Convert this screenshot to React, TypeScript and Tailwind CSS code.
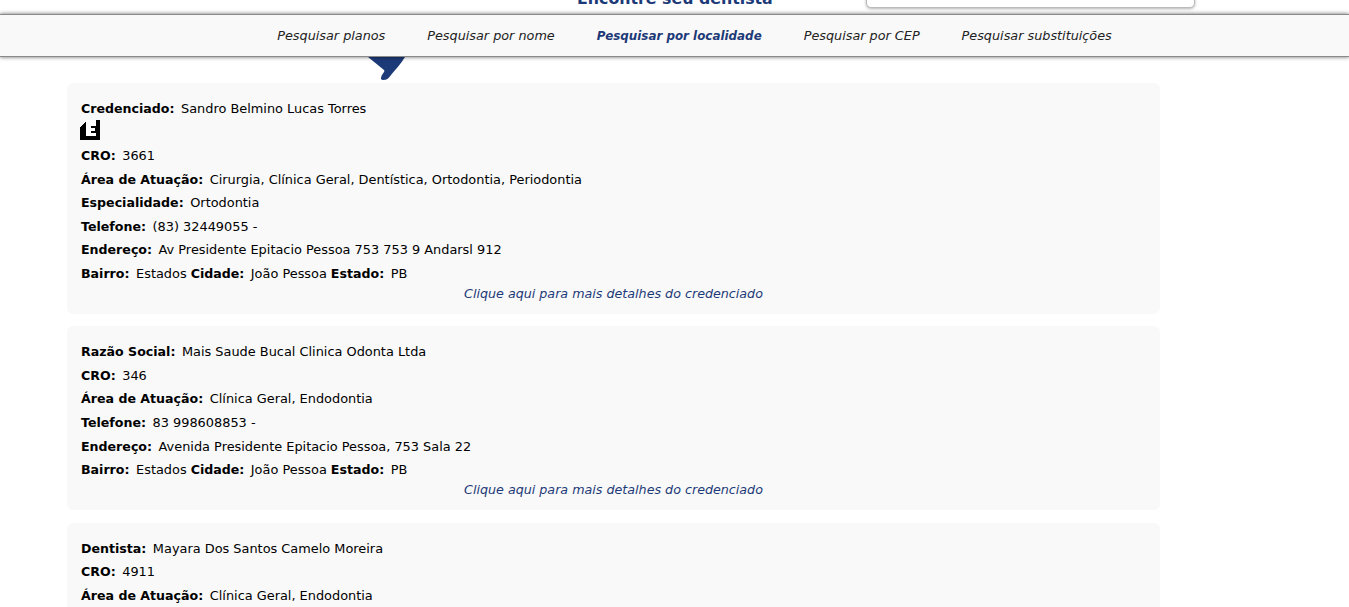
import React from "react";

const font = "font-['DejaVu_Sans',sans-serif]";

function Row({ children }: { children: React.ReactNode }) {
  return <div className="flex h-[23.6px] items-center whitespace-pre"><span>{children}</span></div>;
}
function L({ t, v }: { t: string; v: string }) {
  return (
    <>
      <b className="mr-[6.5px] text-[12.6px]">{t}</b>
      <span className="mr-[4px]">{v}</span>
    </>
  );
}
function More() {
  return <div className="mt-[-1.5px] h-[20px] text-center text-[12.7px] leading-[20px] italic text-[#1d3a78]">Clique aqui para mais detalhes do credenciado</div>;
}

const links = ["Pesquisar planos", "Pesquisar por nome", "Pesquisar por localidade", "Pesquisar por CEP", "Pesquisar substituições"];

export default function App() {
  return (
    <div className={`${font} h-[607px] overflow-hidden bg-white text-[12.9px] text-black`}>
      <div className="relative h-[14px]">
        <div className="absolute left-[866px] top-[-10px] h-[18px] w-[329px] rounded-[5px] border border-[#bbb] bg-white shadow-[0_1px_3px_rgba(0,0,0,0.3)]" />
        <div className="absolute left-[577px] top-[-11px] text-[15.8px] leading-[20px] font-bold text-[#1d3a78]">Encontre seu dentista</div>
      </div>
      <nav className="relative z-10 flex h-[43px] items-center justify-center gap-[42px] border-y border-[#8a8a8a] bg-[#f9f9f9] pt-[1px] pl-[40px] text-[12.8px] shadow-[0_0_4px_rgba(0,0,0,0.6)]">
        {links.map((l, i) => (
          <a key={l} className={i === 2 ? "mt-[1px] text-[11.9px] font-bold italic text-[#1d3a78]" : "italic text-[#222]"}>{l}</a>
        ))}
      </nav>
      <div className="relative">
        <svg className="absolute left-[367px] top-0" width="40" height="25" viewBox="0 0 40 25">
          <path d="M1 0H38C34 7 28 13 24 18C22 21 20 23 16 23C13 23 14 20 15 18C17 15 18 14 17 13Z" fill="#1d3a78" />
        </svg>
      </div>
      <main className="ml-[67px] mt-[26px] flex w-[1093px] flex-col gap-[12.4px]">
        <section className="h-[231px] rounded-[6px] bg-[#f9f9f9] px-[14px] pt-[13.9px]">
          <Row><L t="Credenciado:" v="Sandro Belmino Lucas Torres" /></Row>
          <div className="ml-[-1px] mt-[-0.5px] h-[24.1px]">
            <svg width="20" height="20" viewBox="0 0 20 20" shapeRendering="crispEdges">
              <path d="M0 8L6 1H16V0H20V20H0Z" fill="#000" />
              <path d="M6 0H16V6H11V8H15V11H11V13H16V16H6Z" fill="#fff" />
            </svg>
          </div>
          <Row><L t="CRO:" v="3661" /></Row>
          <Row><L t="Área de Atuação:" v="Cirurgia, Clínica Geral, Dentística, Ortodontia, Periodontia" /></Row>
          <Row><L t="Especialidade:" v="Ortodontia" /></Row>
          <Row><L t="Telefone:" v="(83) 32449055 -" /></Row>
          <Row><L t="Endereço:" v="Av Presidente Epitacio Pessoa 753 753 9 Andarsl 912" /></Row>
          <Row><L t="Bairro:" v="Estados" /><L t="Cidade:" v="João Pessoa" /><L t="Estado:" v="PB" /></Row>
          <More />
        </section>
        <section className="h-[184px] rounded-[6px] bg-[#f9f9f9] px-[14px] pt-[13.9px]">
          <Row><L t="Razão Social:" v="Mais Saude Bucal Clinica Odonta Ltda" /></Row>
          <Row><L t="CRO:" v="346" /></Row>
          <Row><L t="Área de Atuação:" v="Clínica Geral, Endodontia" /></Row>
          <Row><L t="Telefone:" v="83 998608853 -" /></Row>
          <Row><L t="Endereço:" v="Avenida Presidente Epitacio Pessoa, 753 Sala 22" /></Row>
          <Row><L t="Bairro:" v="Estados" /><L t="Cidade:" v="João Pessoa" /><L t="Estado:" v="PB" /></Row>
          <More />
        </section>
        <section className="h-[184px] rounded-[6px] bg-[#f9f9f9] px-[14px] pt-[13.9px]">
          <Row><L t="Dentista:" v="Mayara Dos Santos Camelo Moreira" /></Row>
          <Row><L t="CRO:" v="4911" /></Row>
          <Row><L t="Área de Atuação:" v="Clínica Geral, Endodontia" /></Row>
        </section>
      </main>
    </div>
  );
}
